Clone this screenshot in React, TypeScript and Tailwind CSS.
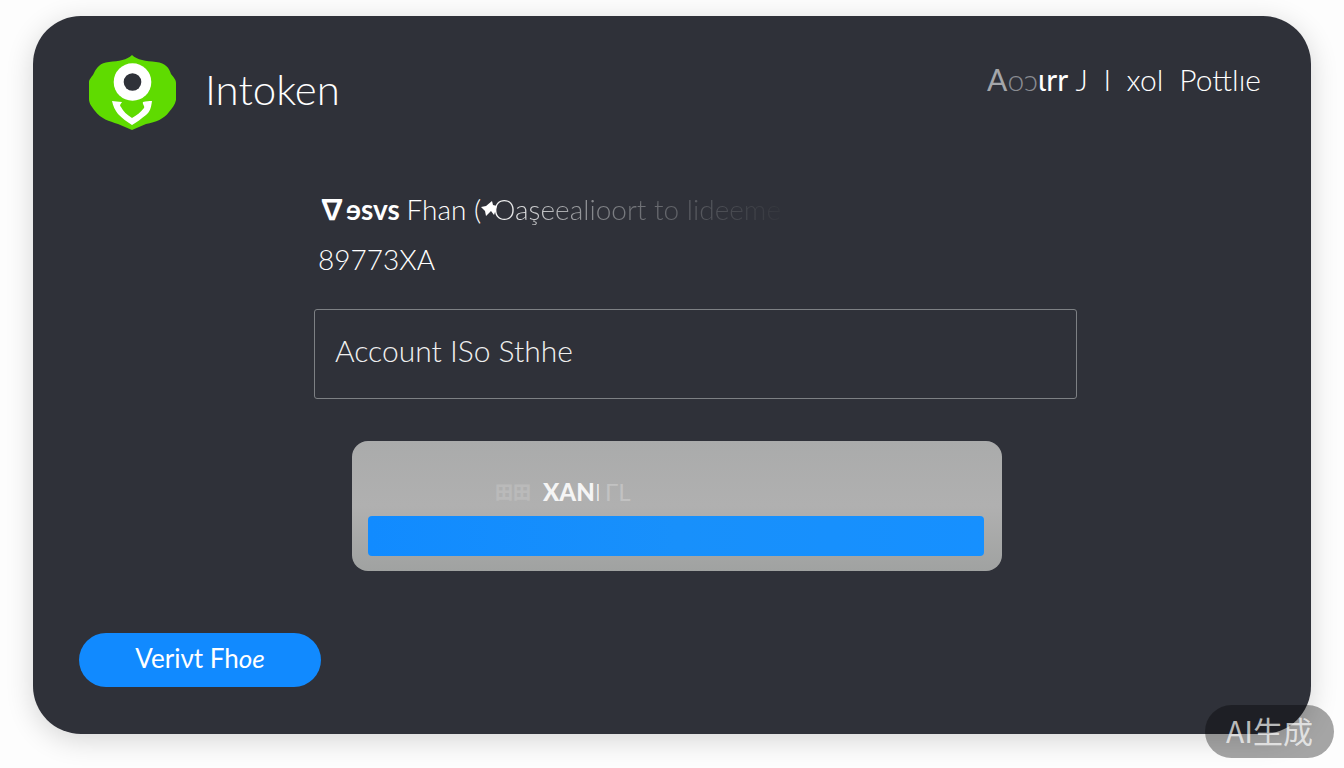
function Logo() {
  return (
    <svg viewBox="0 0 88 76" className="h-[76px] w-[88px] shrink-0" aria-hidden="true">
      <path
        d="M43 0C48 5 57 6 67 7C77 8 80 13 82 19C84 22 87 24 87 28V45C86 50 83 53 80 57C75 64 67 67 57 69L43 75L29 69C20 66 12 64 6 56C2 51 0 48 0 44V27C0 24 3 22 5 18C8 12 11 8 20 7C30 6 38 5 43 0Z"
        fill="#5fdb00"
      />
      <circle cx="43.500" cy="27" r="18.800" fill="#fff" />
      <circle cx="43.500" cy="27" r="8.800" fill="#2f3139" />
      <path
        d="M23 46C26 46 29 47 33 47C32 49 30 50 32 52C34 56 38 60 43 63C48 60 52 57 55 53C56 51 53 49 54 47C57 46 60 46 63 46C62 53 61 57 57 60C52 64 48 67 43 70C38 67 33 63 29 59C26 55 24 51 23 46Z"
        fill="#fff"
      />
    </svg>
  );
}

function Spark() {
  return (
    <svg viewBox="0 0 16 16" className="-mr-1 inline-block h-4 w-4 self-center" aria-hidden="true">
      <path d="M0 6L5 5L11 0L12 4L16 5L13 14L10 10L5 15L4 10Z" fill="#fff" />
    </svg>
  );
}

export default function App() {
  return (
    <div className="relative min-h-screen bg-[#fdfdfd] px-[33px] pt-4 pb-[34px] font-['Lato','Noto_Sans_CJK_SC',sans-serif] text-white">
      <main className="rounded-[48px] bg-[#2f3139] px-[46px] pt-[39px] pb-[47px] shadow-[0_6px_28px_rgba(0,0,0,0.16)]">
        <header className="flex items-start justify-between pr-1 pl-2.5">
          <div className="flex items-center gap-7">
            <Logo />
            <span className="pb-2 text-[42px] leading-[48px] font-light">Intoken</span>
          </div>
          <nav className="pt-1">
            <a href="#profile" className="flex gap-4 text-[30px] leading-[40px] font-light whitespace-pre">
              <span>
                <span className="font-normal text-[#a4a6aa]">A</span>
                <span className="text-[#8a8c92]">oɔ</span>
                <span className="font-normal">ɩrr</span> J
              </span>
              <span>l</span>
              <span>xol</span>
              <span>Pottlıe</span>
            </a>
          </nav>
        </header>

        <section className="mr-[188px] ml-[235px] pt-[60px]">
          <h1 className="flex pl-1 text-[28px] leading-9 font-light whitespace-pre">
            <span className="font-bold">∇ɘsvs </span>
            <span>Fhan (</span>
            <Spark />
            <span className="bg-linear-to-r from-white via-[#85878b] via-35% to-[#34363d] bg-clip-text text-transparent">
              Oaşeealioort to lideeme
            </span>
          </h1>
          <p className="mt-3.5 pl-1 text-[28px] leading-9 font-light">89773XA</p>
          <input
            type="text"
            aria-label="Account"
            defaultValue="Account ISo Sthhe"
            className="mt-8 block h-[90px] w-full rounded-[3px] border border-[#7d8084] bg-transparent px-5 pb-2 text-[30px] font-light text-[#f0f0f0] outline-none"
          />
          <div className="mt-[42px] mr-[75px] ml-[38px] rounded-2xl bg-linear-to-b from-[#aaabab] via-[#b0b0b0] to-[#a0a2a1] pt-[35px] pr-[18px] pb-[15px] pl-4">
            <label
              htmlFor="confirm"
              className="flex h-10 items-center pb-2 pl-[127px] text-[24px] leading-8 font-black text-[#f5f5f5]"
            >
              <span className="mr-3 text-[18px] text-[#bababa]">田田</span>
              <span>XAN</span>
              <span className="font-light">I</span>
              <span className="ml-1 font-normal text-[#c2c2c2]">ΓL</span>
            </label>
            <button
              id="confirm"
              type="button"
              className="block h-10 w-full rounded bg-linear-to-r from-[#118bff] via-[#1890fb] to-[#1690ff]"
            />
          </div>
        </section>

        <button
          type="button"
          className="mt-[62px] block h-[54px] w-[242px] rounded-full bg-[#118aff] pb-1 text-[26px] leading-8 font-normal"
        >
          Veriνt Fh<i>oe</i>
        </button>
      </main>

      <div className="absolute right-2.5 bottom-2.5 flex h-[53px] w-[129px] items-center justify-center rounded-full bg-black/35 pb-1 font-['Noto_Sans_CJK_SC',sans-serif] text-[30px] leading-10 text-white/70">
        AI生成
      </div>
    </div>
  );
}
